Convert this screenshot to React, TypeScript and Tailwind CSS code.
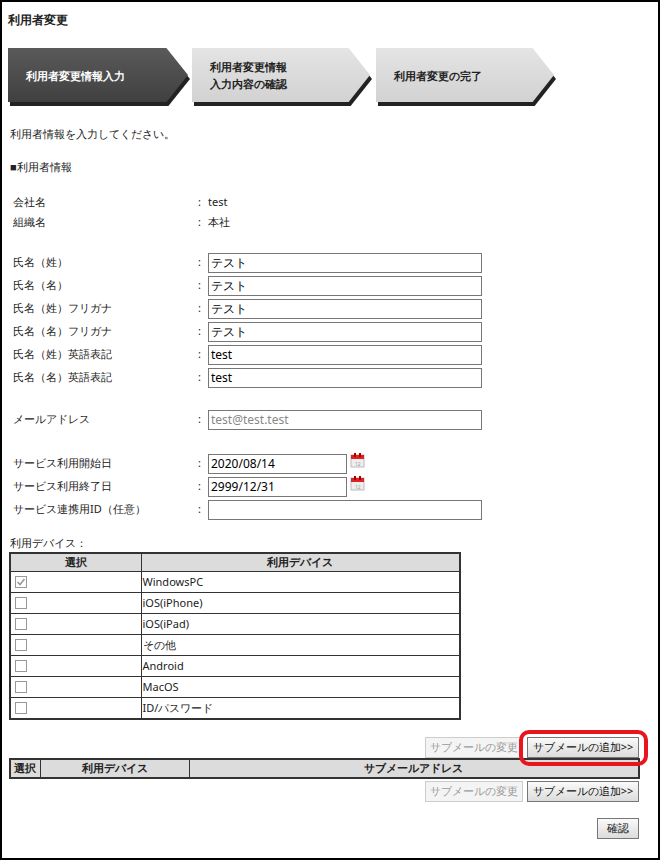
const font = "font-['Meiryo','Noto_Sans_CJK_JP',sans-serif]";

const Step = ({ label, active, first }: { label: React.ReactNode; active?: boolean; first?: boolean }) => (
  <div className={`relative h-[58px] ${first ? "w-[182px]" : "w-[180px]"}`}>
    <div className="absolute inset-0 top-[4px] left-[2px] bg-[#222] [clip-path:polygon(0_0,88%_0,100%_50%,88%_100%,0_100%)]" />
    <div
      className={`absolute left-0 top-0 right-[2px] bottom-[4px] flex items-center pl-[18px] text-[11px] font-bold leading-[17px] [clip-path:polygon(0_0,88%_0,100%_50%,88%_100%,0_100%)] ${
        active ? "bg-gradient-to-b from-[#5a5a5a] to-[#404040] text-white" : "bg-gradient-to-b from-[#e4e4e4] to-[#d2d2d2] text-[#222]"
      }`}
    >
      {label}
    </div>
  </div>
);

const Row = ({ label, children }: { label: string; children: React.ReactNode }) => (
  <div className="flex items-center h-[23px]">
    <div className="w-[188px] pl-[3px]">{label}</div>
    <div className="w-[10px]">:</div>
    {children}
  </div>
);

const Input = ({ value, w = "w-[274px]", grey }: { value: string; w?: string; grey?: boolean }) => (
  <div className={`${w} h-[20px] border border-[#777] px-[2px] flex items-center text-[12px] font-['Liberation_Sans',sans-serif] ${grey ? "text-[#888]" : "text-black"}`}>
    {value}
  </div>
);

const Cal = () => (
  <svg width="15" height="15" viewBox="0 0 15 15" className="ml-[3px] -mt-[6px]">
    <rect x="1" y="2" width="13" height="12" fill="#eee" stroke="#bbb" />
    <rect x="1" y="2" width="13" height="4" fill="#d22" />
    <rect x="4" y="0" width="2" height="4" fill="#a00" />
    <rect x="9" y="0" width="2" height="4" fill="#a00" />
    <text x="5" y="12.5" fontSize="5" fill="#999">12</text>
  </svg>
);

const Check = ({ checked }: { checked?: boolean }) => (
  <div className="w-[12px] h-[12px] border border-[#999] bg-white flex items-center justify-center">
    {checked && (
      <svg width="10" height="10" viewBox="0 0 10 10">
        <path d="M1.5 5 L4 7.5 L8.5 2" stroke="#999" strokeWidth="1.6" fill="none" />
      </svg>
    )}
  </div>
);

const Btn = ({ children, disabled, w }: { children: React.ReactNode; disabled?: boolean; w: string }) => (
  <div
    className={`${w} h-[21px] flex items-center justify-center text-[11px] border ${
      disabled ? "border-[#ccc] bg-[#f4f4f4] text-[#999]" : "border-[#777] bg-gradient-to-b from-[#fafafa] to-[#dcdcdc] text-[#111]"
    }`}
  >
    {children}
  </div>
);

const devices = ["WindowsPC", "iOS(iPhone)", "iOS(iPad)", "その他", "Android", "MacOS", "ID/パスワード"];

export default function App() {
  return (
    <div className={`w-[660px] h-[860px] border-2 border-black bg-white text-[11px] text-[#222] ${font} relative`}>
      <div className="pl-[6px] pt-[9px] text-[12px] font-bold">利用者変更</div>
      <div className="flex gap-[2px] pl-[6px] mt-[19px]">
        <Step first active label="利用者変更情報入力" />
        <Step label={<span>利用者変更情報<br />入力内容の確認</span>} />
        <div className="ml-[2px]"><Step label="利用者変更の完了" /></div>
      </div>

      <div className="pl-[8px] mt-[20px]">利用者情報を入力してください。</div>
      <div className="pl-[8px] mt-[16px]">■利用者情報</div>

      <div className="pl-[8px] mt-[17px] leading-[20px]">
        <div className="flex h-[20px]"><div className="w-[188px] pl-[3px]">会社名</div><div className="w-[10px]">:</div>test</div>
        <div className="flex h-[20px]"><div className="w-[188px] pl-[3px]">組織名</div><div className="w-[10px]">:</div>本社</div>
      </div>

      <div className="pl-[8px] mt-[19px]">
        <Row label="氏名（姓）"><Input value="テスト" /></Row>
        <Row label="氏名（名）"><Input value="テスト" /></Row>
        <Row label="氏名（姓）フリガナ"><Input value="テスト" /></Row>
        <Row label="氏名（名）フリガナ"><Input value="テスト" /></Row>
        <Row label="氏名（姓）英語表記"><Input value="test" /></Row>
        <Row label="氏名（名）英語表記"><Input value="test" /></Row>
      </div>

      <div className="pl-[8px] mt-[19px]">
        <Row label="メールアドレス"><Input value="test@test.test" grey /></Row>
      </div>

      <div className="pl-[8px] mt-[21px]">
        <Row label="サービス利用開始日"><Input value="2020/08/14" w="w-[139px]" /><Cal /></Row>
        <Row label="サービス利用終了日"><Input value="2999/12/31" w="w-[139px]" /><Cal /></Row>
        <Row label="サービス連携用ID（任意）"><Input value="" /></Row>
      </div>

      <div className="pl-[8px] mt-[14px]">利用デバイス：</div>
      <table className="ml-[7px] w-[452px] border-collapse border-2 border-[#333] text-[11px]">
        <thead>
          <tr className="bg-[#dcdcdc] h-[19px]">
            <th className="border border-[#333] w-[131px] font-bold">選択</th>
            <th className="border border-[#333] font-bold">利用デバイス</th>
          </tr>
        </thead>
        <tbody>
          {devices.map((d, i) => (
            <tr key={d} className="h-[21px]">
              <td className="border border-[#333] pl-[4px]"><Check checked={i === 0} /></td>
              <td className="border border-[#333] pl-[1px]">{d}</td>
            </tr>
          ))}
        </tbody>
      </table>

      <div className="flex justify-end gap-[4px] pr-[19px] mt-[17px] relative">
        <Btn disabled w="w-[98px]">サブメールの変更</Btn>
        <Btn w="w-[112px]">サブメールの追加&gt;&gt;</Btn>
        <div className="absolute right-[10px] -top-[7px] w-[129px] h-[36px] border-[4px] border-[#e8141e] rounded-[10px]" />
      </div>
      <table className="ml-[7px] w-[631px] border-collapse border-2 border-[#333] text-[11px]">
        <thead>
          <tr className="bg-[#dcdcdc] h-[19px]">
            <th className="border border-[#333] w-[30px] font-bold">選択</th>
            <th className="border border-[#333] w-[149px] font-bold">利用デバイス</th>
            <th className="border border-[#333] font-bold">サブメールアドレス</th>
          </tr>
        </thead>
      </table>
      <div className="flex justify-end gap-[4px] pr-[19px] mt-[2px]">
        <Btn disabled w="w-[98px]">サブメールの変更</Btn>
        <Btn w="w-[112px]">サブメールの追加&gt;&gt;</Btn>
      </div>
      <div className="flex justify-end pr-[19px] mt-[16px]">
        <Btn w="w-[42px]">確認</Btn>
      </div>
    </div>
  );
}
